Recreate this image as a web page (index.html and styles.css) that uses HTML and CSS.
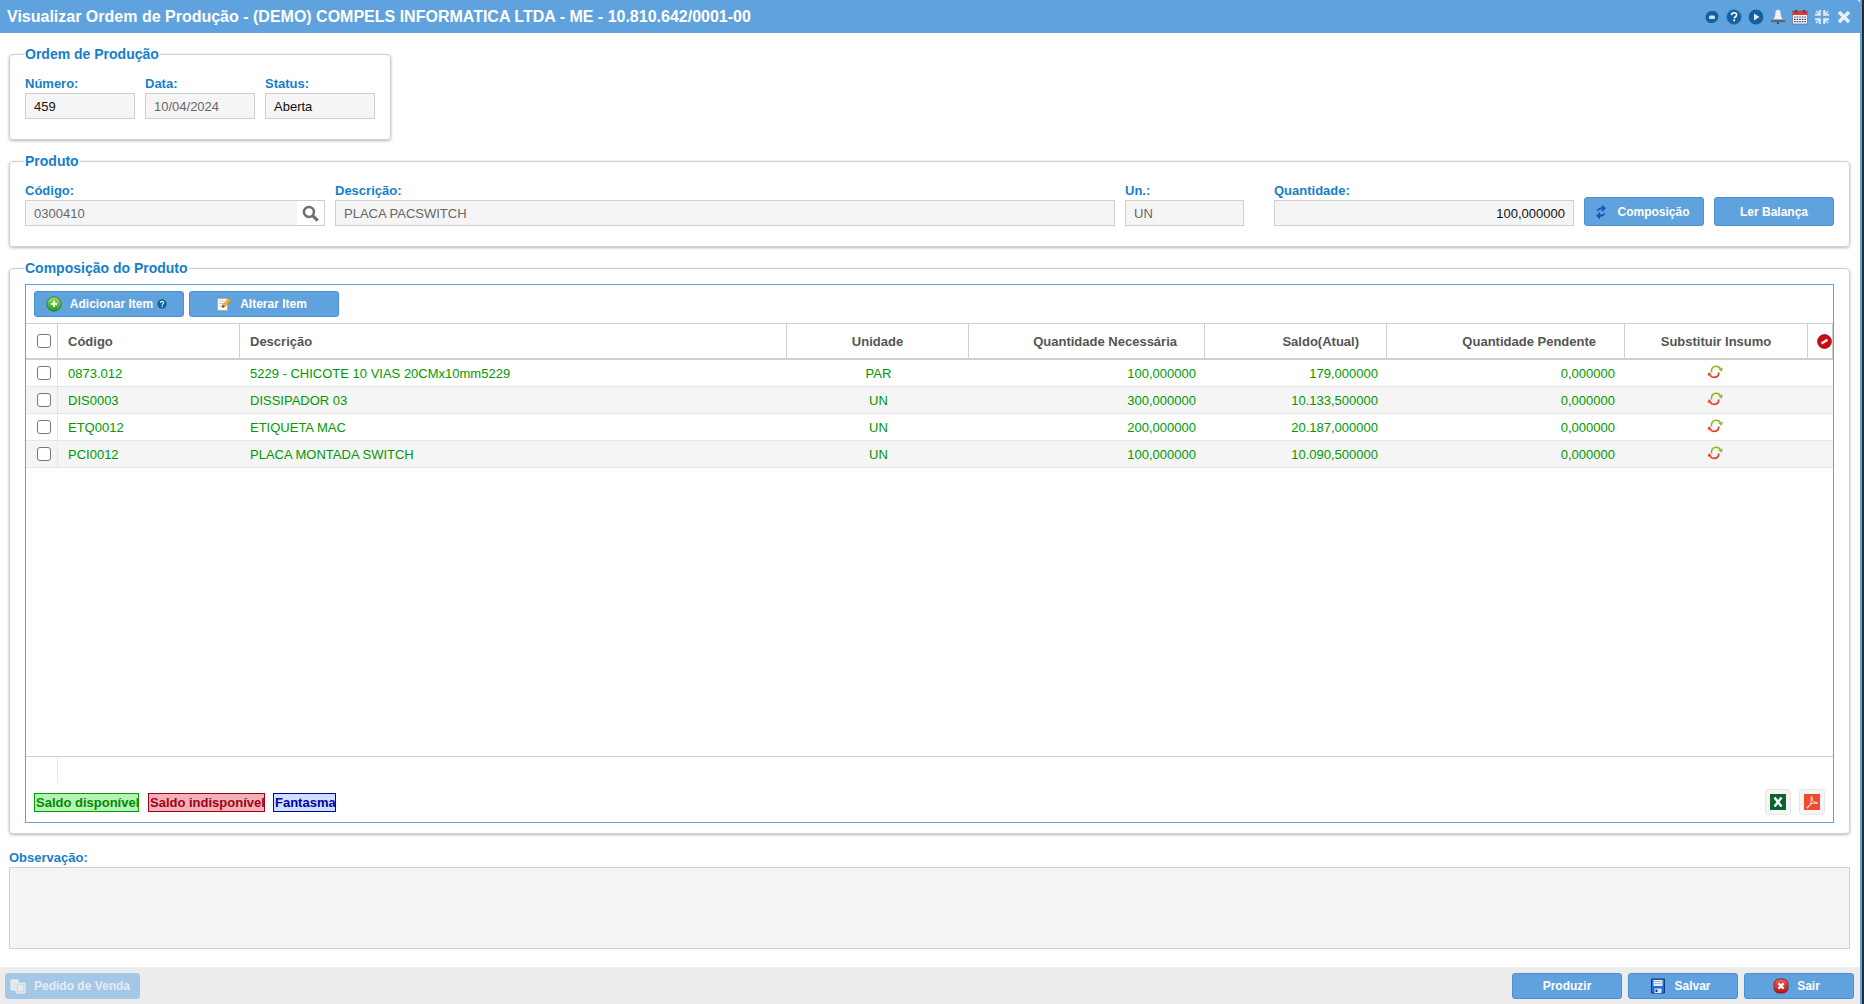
FILE: index.html
```html
<!DOCTYPE html>
<html lang="pt-BR">
<head>
<meta charset="utf-8">
<title>Visualizar Ordem de Produção</title>
<link rel="stylesheet" href="styles.css">
</head>
<body>
<svg class="defs" width="0" height="0" aria-hidden="true">
  <defs>
    <linearGradient id="gGreen" x1="0" y1="0" x2="0" y2="1"><stop offset="0" stop-color="#9fe06a"/><stop offset="1" stop-color="#1f9a1f"/></linearGradient>
    <linearGradient id="gRed" x1="0" y1="0" x2="0" y2="1"><stop offset="0" stop-color="#f0625a"/><stop offset="1" stop-color="#b8130f"/></linearGradient>
    <symbol id="i-swap" viewBox="0 0 16 16">
      <path d="M4.600 8.600C3.800 5.200 5.600 2.400 8.800 2.200c1.800-.1 3.300.5 4.400 1.800" fill="none" stroke="#86bd14" stroke-width="1.600"/>
      <path d="M11 4.800 15.800 3.800 14.600 7.800z" fill="#86bd14"/>
      <path d="M11.600 8.400c.5 2.800-1.200 4.800-4 5-1.900.1-3.500-.5-4.600-1.800" fill="none" stroke="#ec3a28" stroke-width="1.600"/>
      <path d="M.4 11.400 5 11.400 2 8z" fill="#ec3a28"/>
    </symbol>
    <symbol id="i-sync" viewBox="0 0 16 16">
      <path d="M3.600 7.600C3.800 5 6 3.200 9 3.200V.6l4 3.700-4 3.900V5.700C7 5.600 5 6.200 3.600 7.600z" fill="#1a56c4"/>
      <path d="M12.400 8.400C12.200 11 10 12.800 7 12.800v2.600l-4-3.700 4-3.900v2.500c2 .1 4-.5 5.400-1.900z" fill="#1a56c4"/>
    </symbol>
    <symbol id="i-plus" viewBox="0 0 16 16">
      <circle cx="8" cy="8" r="7.200" fill="url(#gGreen)" stroke="#167d16" stroke-width=".8"/>
      <path d="M8 5v6M5 8h6" stroke="#fff" stroke-width="2"/>
    </symbol>
    <symbol id="i-note" viewBox="0 0 16 16">
      <path d="M1.500 2.500h10v12h-10z" fill="#fff" stroke="#aaa"/>
      <path d="M3 5h6M3 7.500h5M3 10h4" stroke="#c8c8c8"/>
      <path d="M6 11.600 6.600 9 13 2.200l2 2-6.400 6.800z" fill="#f5b324" stroke="#b97a10" stroke-width=".6"/>
      <path d="M6 11.600 6.600 9 8.600 10.800z" fill="#5b3c10"/>
    </symbol>
    <symbol id="i-floppy" viewBox="0 0 16 16">
      <path d="M1.500 1h13v14h-13z" fill="#1d6fe0" stroke="#123a7a"/>
      <path d="M3.500 2h9v6h-9z" fill="#eef2f8"/>
      <path d="M3.500 3.600h9M3.500 5.600h9" stroke="#a9b6c8"/>
      <path d="M4.500 10.500h7V15h-7z" fill="#dfe4ea"/>
      <path d="M5.500 11.600h2v2.400h-2z" fill="#123a7a"/>
    </symbol>
    <symbol id="i-exit" viewBox="0 0 16 16">
      <rect x="1" y="1" width="14" height="14" rx="5" fill="url(#gRed)" stroke="#8f100c" stroke-width=".8"/>
      <path d="M5.400 5.400l5.200 5.200M10.600 5.400l-5.200 5.200" stroke="#fff" stroke-width="2.200"/>
    </symbol>
    <symbol id="i-order" viewBox="0 0 16 16">
      <path d="M1 2h7v10H1z" fill="#dfe6ee" stroke="#eef3f8"/>
      <path d="M6 5h9v10H6z" fill="#cfd8e2" stroke="#eef3f8"/>
      <path d="M8 8h5M8 10h5M8 12h5" stroke="#fff"/>
    </symbol>
  </defs>
</svg>
<div class="app">
  <header class="titlebar">
    <h1 class="title">Visualizar Ordem de Produção - (DEMO) COMPELS INFORMATICA LTDA - ME - 10.810.642/0001-00</h1>
    <div class="title-tools">
      <svg class="tool" viewBox="0 0 16 16"><path d="M8 2c4 0 6.400 2 6.400 5.400 0 4-3.400 6.600-7 6.600C3.600 14 1.600 11.600 1.600 8.400 1.600 4.600 4.400 2 8 2z" fill="#14609f"/><rect x="5" y="6.500" width="6" height="3.500" rx="1.500" fill="#cfe4f5"/></svg>
      <svg class="tool" viewBox="0 0 16 16"><circle cx="8" cy="8" r="7.400" fill="#14609f"/><circle cx="8" cy="8" r="7.400" fill="none" stroke="#2f8fc9" stroke-width=".8"/><path d="M5.500 6.200C5.600 4.600 6.700 3.800 8.100 3.800c1.500 0 2.500.9 2.500 2.100 0 1.900-2.300 1.800-2.300 3.500" fill="none" stroke="#fff" stroke-width="1.600"/><rect x="7.300" y="10.500" width="1.800" height="1.800" fill="#fff"/></svg>
      <svg class="tool" viewBox="0 0 16 16"><circle cx="8" cy="8" r="7.400" fill="#14609f"/><path d="M6 4.500 11.500 8 6 11.500z" fill="#dcecf8"/></svg>
      <svg class="tool" viewBox="0 0 16 16"><path d="M8 .5c2.200 0 3 1.900 3 4 0 2.900.8 4.700 2.700 6H2.300C4.200 9.200 5 7.400 5 4.500c0-2.100.8-4 3-4z" fill="#eef2f6" stroke="#8d99a6" stroke-width=".7"/><rect x="1" y="11" width="14" height="2.200" fill="#5a6a7a"/><rect x="7" y="13.200" width="2" height="1.800" fill="#3e4c5a"/></svg>
      <svg class="tool" viewBox="0 0 16 16"><rect x="0.500" y="2" width="15" height="13" fill="#f2f4f7" stroke="#5a6270" stroke-width=".6"/><rect x="0.500" y="2" width="15" height="4" fill="#d43c3c"/><path d="M4 .8v3M12 .8v3" stroke="#333" stroke-width="1.200"/><path d="M2 8h12M2 10.300h12M2 12.600h12" stroke="#3b4a66" stroke-width="1.200" stroke-dasharray="1.600 1"/></svg>
      <svg class="tool" viewBox="0 0 16 16"><path d="M5.800 1v4.800H1M10.200 1v4.800H15M5.800 15v-4.800H1M10.200 15v-4.800H15" fill="none" stroke="#dcecf8" stroke-width="2"/><path d="M2 2l3 3M14 2l-3 3M2 14l3-3M14 14l-3-3" stroke="#dcecf8" stroke-width="1.400"/></svg>
      <svg class="tool" viewBox="0 0 16 16"><path d="M3 3l10 10M13 3 3 13" stroke="#e6f1fa" stroke-width="3.400"/></svg>
    </div>
  </header>

  <main class="content">
    <fieldset class="panel panel-order">
      <legend class="panel-legend">Ordem de Produção</legend>
      <div class="fields">
        <div class="field w-110"><span class="label">Número:</span><div class="input strong">459</div></div>
        <div class="field w-110"><span class="label">Data:</span><div class="input">10/04/2024</div></div>
        <div class="field w-110"><span class="label">Status:</span><div class="input strong">Aberta</div></div>
      </div>
    </fieldset>

    <fieldset class="panel">
      <legend class="panel-legend">Produto</legend>
      <div class="fields">
        <div class="field w-300">
          <span class="label">Código:</span>
          <div class="input input-search">
            <span class="input-text">0300410</span>
            <span class="search-btn">
              <svg class="search-ico" viewBox="0 0 16 16"><circle cx="6.500" cy="6.500" r="4.700" fill="none" stroke="#6f6f6f" stroke-width="2.400"/><path d="M10 10l4.800 4.800" stroke="#6f6f6f" stroke-width="3"/></svg>
            </span>
          </div>
        </div>
        <div class="field grow"><span class="label">Descrição:</span><div class="input">PLACA PACSWITCH</div></div>
        <div class="field w-119"><span class="label">Un.:</span><div class="input">UN</div></div>
        <div class="field w-300 after-gap"><span class="label">Quantidade:</span><div class="input right strong">100,000000</div></div>
        <button class="btn btn-tall w-120" type="button"><svg class="ico"><use href="#i-sync"/></svg>Composição</button>
        <button class="btn btn-tall w-120" type="button">Ler Balança</button>
      </div>
    </fieldset>

    <fieldset class="panel">
      <legend class="panel-legend">Composição do Produto</legend>
      <section class="gridbox">
        <div class="grid-tools">
          <button class="btn w-150" type="button"><svg class="ico"><use href="#i-plus"/></svg>Adicionar Item<svg class="help" viewBox="0 0 16 16"><circle cx="8" cy="8" r="7.500" fill="#14609f"/><path d="M5.500 6.200C5.600 4.600 6.700 3.800 8.100 3.800c1.500 0 2.500.9 2.500 2.100 0 1.900-2.300 1.800-2.300 3.500" fill="none" stroke="#fff" stroke-width="1.800"/><rect x="7.300" y="10.500" width="2" height="2" fill="#fff"/></svg></button>
          <button class="btn w-150" type="button"><svg class="ico"><use href="#i-note"/></svg>Alterar Item</button>
        </div>
        <div class="grid-scroll">
          <table class="grid">
            <colgroup>
              <col class="c-check"><col class="c-code"><col class="c-desc"><col class="c-un"><col class="c-nec"><col class="c-sal"><col class="c-pen"><col class="c-sub"><col class="c-del">
            </colgroup>
            <thead>
              <tr>
                <th class="check-cell"><span class="checkbox"></span></th>
                <th>Código</th>
                <th>Descrição</th>
                <th class="center">Unidade</th>
                <th class="right hd-num">Quantidade Necessária</th>
                <th class="right hd-num">Saldo(Atual)</th>
                <th class="right hd-num hd-wide">Quantidade Pendente</th>
                <th class="center">Substituir Insumo</th>
                <th class="del-cell"><svg class="del-ico" viewBox="0 0 16 16"><circle cx="8" cy="8" r="7.400" fill="#d30a12" stroke="#7c1013" stroke-width=".8"/><path d="M4.800 10.200l6.400-4" stroke="#fff" stroke-width="2.400"/></svg></th>
              </tr>
            </thead>
            <tbody>
              <tr>
                <td class="check-cell"><span class="checkbox"></span></td><td>0873.012</td><td>5229 - CHICOTE 10 VIAS 20CMx10mm5229</td><td class="center">PAR</td><td class="right">100,000000</td><td class="right">179,000000</td><td class="right pend">0,000000</td><td class="center"><svg class="swap"><use href="#i-swap"/></svg></td><td></td>
              </tr>
              <tr>
                <td class="check-cell"><span class="checkbox"></span></td><td>DIS0003</td><td>DISSIPADOR 03</td><td class="center">UN</td><td class="right">300,000000</td><td class="right">10.133,500000</td><td class="right pend">0,000000</td><td class="center"><svg class="swap"><use href="#i-swap"/></svg></td><td></td>
              </tr>
              <tr>
                <td class="check-cell"><span class="checkbox"></span></td><td>ETQ0012</td><td>ETIQUETA MAC</td><td class="center">UN</td><td class="right">200,000000</td><td class="right">20.187,000000</td><td class="right pend">0,000000</td><td class="center"><svg class="swap"><use href="#i-swap"/></svg></td><td></td>
              </tr>
              <tr>
                <td class="check-cell"><span class="checkbox"></span></td><td>PCI0012</td><td>PLACA MONTADA SWITCH</td><td class="center">UN</td><td class="right">100,000000</td><td class="right">10.090,500000</td><td class="right pend">0,000000</td><td class="center"><svg class="swap"><use href="#i-swap"/></svg></td><td></td>
              </tr>
            </tbody>
          </table>
        </div>
        <div class="grid-summary"><span class="summary-cell"></span></div>
        <div class="grid-foot">
          <span class="tag tag-green">Saldo disponível</span>
          <span class="tag tag-red">Saldo indisponível</span>
          <span class="tag tag-blue">Fantasma</span>
          <span class="export export-first">
            <svg class="export-ico" viewBox="0 0 16 16"><rect width="16" height="16" fill="#0c6332"/><path d="M4.500 3.500l7 9M11.500 3.500l-7 9" stroke="#fff" stroke-width="2.400" fill="none"/></svg>
          </span>
          <span class="export">
            <svg class="export-ico" viewBox="0 0 16 16"><rect width="16" height="16" fill="#ee4a30"/><path d="M7.500 2.500c-1 0 .4 5-1 7.500S2 13.500 3 14s3-3.500 5-4.500 5 .5 5.500-.3S9.500 8.500 8.500 6.500 8.500 2.500 7.500 2.500z" fill="none" stroke="#fff" stroke-width=".9"/></svg>
          </span>
        </div>
      </section>
    </fieldset>

    <div class="obs">
      <span class="label obs-label">Observação:</span>
      <div class="obs-box"></div>
    </div>
  </main>

  <footer class="footer">
    <button class="btn btn-disabled w-135" type="button"><svg class="ico"><use href="#i-order"/></svg>Pedido de Venda</button>
    <div class="footer-right">
      <button class="btn w-110" type="button">Produzir</button>
      <button class="btn w-110" type="button"><svg class="ico"><use href="#i-floppy"/></svg>Salvar</button>
      <button class="btn w-110" type="button"><svg class="ico"><use href="#i-exit"/></svg>Sair</button>
    </div>
  </footer>
</div>
</body>
</html>
```
FILE: styles.css
```css
* { box-sizing: border-box; }

html, body {
  margin: 0;
  height: 100%;
  overflow: hidden;
  background: #2b2b2b;
  font-family: "Liberation Sans", Arial, sans-serif;
  font-size: 13px;
  color: #333;
}

.defs { position: absolute; }

.app {
  display: flex;
  flex-direction: column;
  width: 1862px;
  height: 1004px;
  background: #fff;
  border-right: 2px solid #5fa2dd;
}

.titlebar {
  display: flex;
  align-items: center;
  justify-content: space-between;
  height: 33px;
  flex: none;
  padding: 0 8px 0 7px;
  background: #5fa2dd;
  border-top-right-radius: 4px;
}

.title {
  margin: 0;
  font-size: 16px;
  font-weight: bold;
  color: #fff;
  white-space: nowrap;
}

.title-tools {
  display: flex;
  align-items: center;
  gap: 6px;
}

.tool { width: 16px; height: 16px; display: block; }

.content {
  flex: 1;
  padding: 13px 10px 0 9px;
  min-height: 0;
}

.panel {
  margin: 0 0 13px;
  padding: 12px 15px 20px;
  min-width: 0;
  border: 1px solid #cfcfcf;
  border-radius: 4px;
  box-shadow: 0 1px 3px rgba(0, 0, 0, .28);
}

.panel-order { width: 382px; }

.panel-legend {
  padding: 0 1px;
  margin-left: -1px;
  height: 17px;
  line-height: 17px;
  font-size: 14px;
  font-weight: bold;
  color: #157fcc;
}

.fields {
  display: flex;
  align-items: flex-end;
  gap: 10px;
}

.field { display: flex; flex-direction: column; gap: 3px; }
.grow { flex: 1; min-width: 0; }
.w-110 { width: 110px; }
.w-119 { width: 119px; }
.w-120 { width: 120px; }
.w-135 { width: 135px; }
.w-150 { width: 150px; }
.w-300 { width: 300px; }
.after-gap { margin-left: 20px; }

.label {
  display: block;
  height: 15px;
  line-height: 17px;
  font-size: 13px;
  font-weight: bold;
  color: #157fcc;
}

.input {
  height: 26px;
  line-height: 25px;
  padding: 0 8px;
  background: #f5f5f5;
  border: 1px solid #cfcfcf;
  font-size: 13px;
  color: #666;
  white-space: nowrap;
}

.strong { color: #111; }
.right { text-align: right; }
.center { text-align: center; }

.input-search {
  display: flex;
  padding-right: 0;
}

.input-text { flex: 1; }

.search-btn {
  display: flex;
  align-items: center;
  justify-content: center;
  width: 27px;
  background: #fff;
}

.search-ico { width: 17px; height: 17px; }

.btn {
  display: inline-flex;
  align-items: center;
  justify-content: center;
  gap: 8px;
  height: 26px;
  padding: 0;
  background: #5fa2dd;
  border: 1px solid #4a8fd0;
  border-radius: 3px;
  font-family: inherit;
  font-size: 12px;
  font-weight: bold;
  color: #fff;
}

.btn-tall { height: 29px; }

.ico { width: 16px; height: 16px; flex: none; margin-left: -5px; }

.help { width: 10px; height: 10px; margin-left: -4px; flex: none; }

.btn-disabled {
  background: #a5c7e6;
  border-color: #a5c7e6;
  color: #e3edf6;
}

.gridbox {
  display: flex;
  flex-direction: column;
  height: 539px;
  margin-top: -5px;
  margin-bottom: -10px;
  border: 1px solid #5fa2dd;
}

.grid-tools {
  display: flex;
  gap: 5px;
  flex: none;
  height: 38px;
  padding: 6px 8px;
}

.grid-scroll { flex: 1; min-height: 0; }

.grid {
  width: 1807px;
  table-layout: fixed;
  border-collapse: separate;
  border-spacing: 0;
}

.c-check { width: 32px; }
.c-code { width: 182px; }
.c-desc { width: 547px; }
.c-un { width: 182px; }
.c-nec { width: 236px; }
.c-sal { width: 182px; }
.c-pen { width: 238px; }
.c-sub { width: 183px; }
.c-del { width: 25px; }

.grid th {
  height: 37px;
  padding: 0 10px;
  background: #fff;
  border-top: 1px solid #cfcfcf;
  border-bottom: 2px solid #cfcfcf;
  border-right: 1px solid #cfcfcf;
  font-size: 13px;
  font-weight: bold;
  color: #555;
  text-align: left;
}

.grid th.center { text-align: center; }
.grid th.right { text-align: right; }
.grid th.hd-num { padding-right: 27px; }
.grid th.hd-wide { padding-right: 28px; }

.grid td {
  height: 27px;
  padding: 0 9px 0 10px;
  border-bottom: 1px solid #e6e6e6;
  font-size: 13px;
  color: #009900;
  white-space: nowrap;
  overflow: hidden;
}

.grid td.pend { padding-right: 10px; }

.grid tbody tr:nth-child(even) td { background: #f5f5f5; }

.grid .check-cell {
  padding: 0;
  vertical-align: middle;
}

.grid td.check-cell { border-right: 1px solid #e6e6e6; }

.grid .del-cell { padding: 0 0 0 9px; border-right: 1px solid #cfcfcf; }

.del-ico { display: block; width: 15px; height: 15px; }

.checkbox {
  display: block;
  width: 14px;
  height: 14px;
  margin: 0 0 0 11px;
  background: #fff;
  border: 1.5px solid #767676;
  border-radius: 3px;
}

.swap { display: block; width: 16px; height: 16px; margin: -3px auto 0; transform: translateX(-2px); }

.grid-summary {
  flex: none;
  height: 27px;
  border-top: 1px solid #cfcfcf;
}

.summary-cell {
  display: block;
  width: 32px;
  height: 100%;
  border-right: 1px solid #e6e6e6;
}

.grid-foot {
  display: flex;
  align-items: center;
  gap: 9px;
  flex: none;
  height: 39px;
  padding: 0 8px;
}

.tag {
  height: 19px;
  line-height: 17px;
  padding: 0 1px;
  border: 1px solid;
  font-size: 13px;
  font-weight: bold;
  white-space: nowrap;
}

.tag-green { width: 105px; color: #008c00; border-color: #00a000; background: #b6f1b6; }
.tag-red { width: 117px; color: #a00018; border-color: #a00018; background: #f0b2b8; }
.tag-blue { width: 63px; margin-left: -1px; color: #0000a8; border-color: #0000a8; background: #cfe0ff; }

.export {
  display: flex;
  align-items: center;
  justify-content: center;
  width: 26px;
  height: 26px;
  margin-top: -2px;
  background: #f5f5f5;
  border: 1px solid #e6e6e6;
  border-radius: 3px;
}

.export-first { margin-left: auto; }
.export + .export { margin-left: -1px; }

.export-ico { width: 16px; height: 16px; }

.obs { margin-top: 16px; }
.obs-label { line-height: 15px; margin-bottom: 2px; }

.obs-box {
  height: 82px;
  background: #f5f5f5;
  border: 1px solid #cfcfcf;
}

.footer {
  display: flex;
  align-items: flex-start;
  justify-content: space-between;
  flex: none;
  height: 37px;
  padding: 6px 6px 5px 5px;
  background: #ececec;
}

.footer-right { display: flex; gap: 6px; }
```
